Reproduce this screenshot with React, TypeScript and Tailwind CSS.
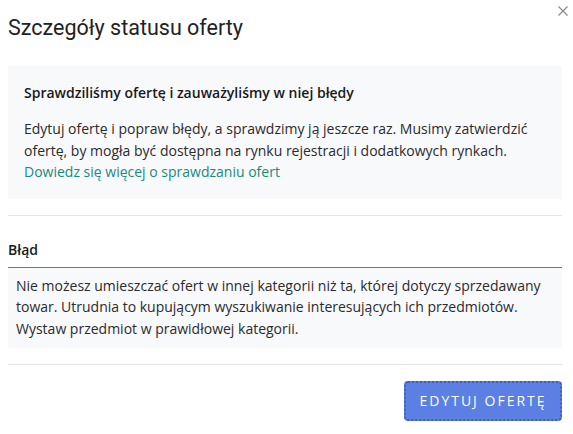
import React from 'react'

export default function App() {
  return (
    <div className="relative h-[434px] w-[573px] bg-white text-[#222]" style={{ fontFamily: '"Open Sans", sans-serif' }}>
      {/* Close */}
      <button className="absolute right-[3px] top-[4px] flex h-[14px] w-[14px] items-center justify-center text-[#8a8a8a]">
        <svg width="10" height="10" viewBox="0 0 10 10" fill="none" stroke="currentColor" strokeWidth="1.2">
          <path d="M0.5 0.5l9 9M9.5 0.5l-9 9" />
        </svg>
      </button>

      <div className="ml-[8px] w-[554px] pt-[14px]">
        <h1 className="text-[21.5px] leading-[28px] text-[#222]" style={{ fontFamily: 'Roboto, sans-serif' }}>
          Szczegóły statusu oferty
        </h1>

        {/* Info box */}
        <div className="mt-[24px] bg-[#f8f9fb] px-[16px] pb-[16px] pt-[17px]">
          <h2 className="text-[14px] font-semibold leading-[20px] text-[#1a1a1a]">
            Sprawdziliśmy ofertę i zauważyliśmy w niej błędy
          </h2>
          <p className="mt-[15px] text-[14px] leading-[21.5px] text-[#2b2b2b]">
            Edytuj ofertę i popraw błędy, a sprawdzimy ją jeszcze raz. Musimy zatwierdzić ofertę, by mogła być dostępna na rynku rejestracji i dodatkowych rynkach.
            <br />
            <a className="text-[#1a8a7b]">Dowiedz się więcej o sprawdzaniu ofert</a>
          </p>
        </div>

        <div className="mt-[16px] h-px bg-[#e4e4e4]" />

        {/* Error */}
        <h3 className="mt-[24px] text-[14px] font-semibold leading-[20px] text-[#1a1a1a]">Błąd</h3>
        <div className="mt-[7px] border-t border-[#767676] bg-[#f8f9fb] px-[8px] pb-[8px] pt-[7px]">
          <p className="text-[14px] leading-[21.7px] text-[#2b2b2b]">
            Nie możesz umieszczać ofert w innej kategorii niż ta, której dotyczy sprzedawany towar. Utrudnia to kupującym wyszukiwanie interesujących ich przedmiotów. Wystaw przedmiot w prawidłowej kategorii.
          </p>
        </div>

        <div className="mt-[16px] h-px bg-[#e4e4e4]" />

        <div className="mt-[16px] flex justify-end">
          <button className="h-[40px] w-[158px] rounded-[4px] border-2 border-dotted border-[#3f5fb5] bg-[#5b7fe2] text-[14px] tracking-[2px] text-white">
            EDYTUJ OFERTĘ
          </button>
        </div>
      </div>
    </div>
  )
}
